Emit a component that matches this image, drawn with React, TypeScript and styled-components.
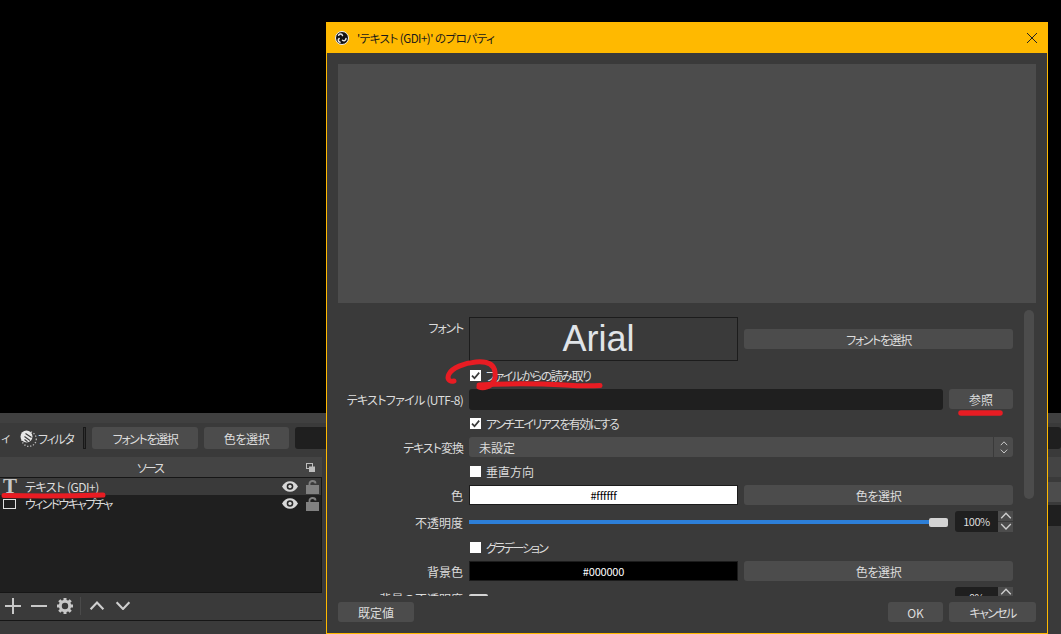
import React, { FunctionComponent } from "react";
import styled, { createGlobalStyle } from "styled-components";

const FIELD = "#4c4c4c";
const PANEL = "#3a3a3a";
const DARK = "#1f1f1f";
const TEXT = "#dcdcdc";
const RED = "#e81c23";

const GlobalStyle = createGlobalStyle`
    html, body {
        margin: 0;
        background: #000;
        overflow: hidden;
    }
    * {
        box-sizing: border-box;
    }
    body {
        font-family: "Noto Sans CJK JP", sans-serif;
        font-size: 12px;
        font-feature-settings: "palt";
        color: ${TEXT};
    }
`;

const ObsLogo = () => (
    <svg width="14" height="14" viewBox="0 0 14 14">
        <circle cx="7" cy="7" r="6.5" fill="#111" stroke="#f0f0f0" strokeWidth="1" />
        <g fill="none" stroke="#e8e8e8" strokeWidth="1.5" strokeLinecap="round">
            <path d="M3.600 4.200C4.800 2.600 7 2.700 7.500 4.600" />
            <path d="M11 7.600C10.800 9.600 8.800 10.400 7.500 9.200" />
            <path d="M5 11.200C3.200 10.600 2.600 8.500 4.200 7.500" />
        </g>
    </svg>
);

const CloseGlyph = () => (
    <svg width="12" height="12" viewBox="0 0 12 12">
        <path d="M1 1l10 10M11 1L1 11" stroke="#222" strokeWidth="1" fill="none" />
    </svg>
);

const Check = () => (
    <svg width="11" height="11" viewBox="0 0 11 11">
        <path d="M2 5.600l2.500 2.600L9.200 2.600" stroke="#3a3a3a" strokeWidth="1.700" fill="none" />
    </svg>
);

const Chevron: FunctionComponent<{ up?: boolean; size?: number; width?: number }> = ({
    up = false,
    size = 10,
    width = 1.2,
}) => (
    <svg width={size} height={size * 0.6} viewBox="0 0 10 6">
        <path
            d={up ? "M1 5.200L5 1l4 4.200" : "M1 .8L5 5l4-4.200"}
            stroke="#cfcfcf"
            strokeWidth={width}
            fill="none"
        />
    </svg>
);

const EyeIcon = () => (
    <svg width="16" height="11" viewBox="0 0 16 11">
        <path
            d="M0 5.500C2 2 4.800.3 8 .3s6 1.700 8 5.200c-2 3.500-4.800 5.200-8 5.200S2 9 0 5.500z"
            fill="#d8d8d8"
        />
        <circle cx="8" cy="5.500" r="3.300" fill="#2a2a2a" />
        <circle cx="8" cy="5.500" r="1.700" fill="#d8d8d8" />
    </svg>
);

const LockIcon = () => (
    <svg width="13" height="14" viewBox="0 0 13 14">
        <path d="M3.500 5.500V3.400C3.500 1.900 4.800 1 6.500 1S9.500 1.900 9.500 3.400" stroke="#808080" strokeWidth="1.800" fill="none" />
        <rect x="0" y="5" width="13" height="9" fill="#808080" />
    </svg>
);

const FilterIcon = () => (
    <svg width="17" height="17" viewBox="0 0 17 17">
        <circle cx="9" cy="9" r="7.300" fill="none" stroke="#bdbdbd" strokeWidth="1.300" strokeDasharray="1.300 1.700" />
        <circle cx="6.500" cy="6.500" r="6" fill="#e8e8e8" />
        <path d="M5.500 3.500l6 4M4.500 6.500l5.500 4M4.500 9.500l3 2.300" stroke="#3a3a3a" strokeWidth="1.100" />
    </svg>
);

const FloatIcon = () => (
    <svg width="9" height="9" viewBox="0 0 9 9">
        <rect x=".5" y=".5" width="6" height="5" fill="none" stroke="#bdbdbd" />
        <rect x="3" y="3.500" width="6" height="5.500" fill="#bdbdbd" />
    </svg>
);

const PlusIcon = () => (
    <svg width="16" height="16" viewBox="0 0 16 16">
        <path d="M0 8h16M8 0v16" stroke="#c8c8c8" strokeWidth="2" />
    </svg>
);

const MinusIcon = () => (
    <svg width="16" height="16" viewBox="0 0 16 16">
        <path d="M0 8h16" stroke="#c8c8c8" strokeWidth="2" />
    </svg>
);

const GearIcon = () => (
    <svg width="16" height="16" viewBox="0 0 16 16">
        <circle cx="8" cy="8" r="4.700" fill="none" stroke="#c8c8c8" strokeWidth="3" />
        <g stroke="#c8c8c8" strokeWidth="3">
            <path d="M8 0v3M8 13v3M0 8h3M13 8h3M2.300 2.300l2.100 2.100M11.600 11.600l2.100 2.100M13.700 2.300l-2.100 2.100M4.400 11.600l-2.100 2.100" />
        </g>
    </svg>
);

const Markup = () => (
    <Overlay width="1061" height="634" viewBox="0 0 1061 634">
        <g fill="none" stroke={RED} strokeLinecap="round" strokeLinejoin="round">
            <path strokeWidth="5" d="M4 495.500C30 496 70 496 103 495" />
            <path
                strokeWidth="5"
                d="M454 381C448 382 447 378 449 374C452 368 464 363 476 362C488 361 494 365 495 372C496 379 493 385 487 387C484 388 481 388 479 387"
            />
            <path strokeWidth="5" d="M479 385C515 383 545 384 565 385C580 386 592 386 600 385.500" />
            <path strokeWidth="5.500" d="M961 413H1000" />
        </g>
    </Overlay>
);

const CheckField: FunctionComponent<{ label: string; checked?: boolean; track?: number }> = ({
    label,
    checked = false,
    track = 0,
}) => (
    <Row>
        <span />
        <CheckRow>
            <CheckBox>{checked && <Check />}</CheckBox>
            <Fit $track={track}>{label}</Fit>
        </CheckRow>
    </Row>
);

const ColorField: FunctionComponent<{ label: string; value: string; light?: boolean }> = ({ label, value, light = false }) => (
    <Row>
        <Label>{label}</Label>
        <Swatch $light={light}>{value}</Swatch>
        <Button><Fit $track={-0.4}>色を選択</Fit></Button>
    </Row>
);

const SliderField: FunctionComponent<{ label: string; value: number }> = ({ label, value }) => (
    <TallRow>
        <SliderLabel>{label}</SliderLabel>
        <SliderCell>
            <Slider>
                <SliderFill $value={value} />
                <Thumb />
                <SliderRest $value={100 - value} />
            </Slider>
            <Spin>
                <SpinValue>{value}%</SpinValue>
                <SpinButtons>
                    <SpinButton><Chevron up size={12} width={1.1} /></SpinButton>
                    <SpinButton><Chevron size={12} width={1.1} /></SpinButton>
                </SpinButtons>
            </Spin>
        </SliderCell>
    </TallRow>
);

const App = () => {
    return (
        <Root>
            <GlobalStyle />
            <Preview />
            <Main>
                <TopBand />
                <ToolBar>
                    <Clipped>ィ</Clipped>
                    <FilterItem>
                        <FilterIcon />
                        <Fit $track={-1.3}>フィルタ</Fit>
                    </FilterItem>
                    <Splitter />
                    <FontButton><Fit $track={-1.4}>フォントを選択</Fit></FontButton>
                    <ColorButton><Fit $track={-0.4}>色を選択</Fit></ColorButton>
                    <TextInput />
                </ToolBar>
                <Docks>
                    <SourceDock>
                        <DockTitle>
                            <Fit $track={-2}>ソース</Fit>
                            <FloatSlot><FloatIcon /></FloatSlot>
                        </DockTitle>
                        <SourceList>
                            <SourceRow $selected>
                                <SourceIcon>T</SourceIcon>
                                <SourceName $track={-0.5}>テキスト (GDI+)</SourceName>
                                <EyeIcon />
                                <LockIcon />
                            </SourceRow>
                            <SourceRow>
                                <SourceIcon><WindowIcon /></SourceIcon>
                                <SourceName $track={-1.7}>ウィンドウキャプチャ</SourceName>
                                <EyeIcon />
                                <LockIcon />
                            </SourceRow>
                        </SourceList>
                        <SourceTools>
                            <PlusIcon />
                            <MinusIcon />
                            <GearIcon />
                            <ToolDivider />
                            <Chevron up size={16} width={1.3} />
                            <Chevron size={16} width={1.3} />
                        </SourceTools>
                    </SourceDock>
                    <MixerDock>
                        <MixerTitle />
                        <MixerButton />
                        <MixerField />
                    </MixerDock>
                </Docks>
            </Main>

            <Dialog>
                <TitleBar>
                    <ObsLogo />
                    <Title>'テキスト (GDI+)' のプロパティ</Title>
                    <CloseSlot><CloseGlyph /></CloseSlot>
                </TitleBar>
                <DialogBody>
                    <PropertyPreview />
                    <ScrollArea>
                        <Form>
                            <FontRow>
                                <TopLabel><Fit $track={-1.2}>フォント</Fit></TopLabel>
                                <FontBox>Arial</FontBox>
                                <FontPicker><Fit $track={-1.4}>フォントを選択</Fit></FontPicker>
                            </FontRow>
                            <CheckField label="ファイルからの読み取り" checked track={-1.5} />
                            <Row>
                                <Label><Fit $track={-0.7}>テキストファイル (UTF-8)</Fit></Label>
                                <FileCell>
                                    <FileInput />
                                    <BrowseButton>参照</BrowseButton>
                                </FileCell>
                            </Row>
                            <CheckField label="アンチエイリアスを有効にする" checked track={-1.6} />
                            <Row>
                                <Label><Fit $track={-1}>テキスト変換</Fit></Label>
                                <Select>
                                    <SelectValue>未設定</SelectValue>
                                    <SelectArrows>
                                        <Chevron up size={8} />
                                        <Chevron size={8} />
                                    </SelectArrows>
                                </Select>
                            </Row>
                            <CheckField label="垂直方向" />
                            <ColorField label="色" value="#ffffff" light />
                            <SliderField label="不透明度" value={100} />
                            <CheckField label="グラデーション" track={-2} />
                            <ColorField label="背景色" value="#000000" />
                            <SliderField label="背景の不透明度" value={0} />
                        </Form>
                        <ScrollTrack>
                            <ScrollThumb />
                        </ScrollTrack>
                    </ScrollArea>
                    <Footer>
                        <DefaultsButton>既定値</DefaultsButton>
                        <FooterRight>
                            <OkButton>OK</OkButton>
                            <CancelButton><Fit $track={-1.6}>キャンセル</Fit></CancelButton>
                        </FooterRight>
                    </Footer>
                </DialogBody>
            </Dialog>
            <Markup />
        </Root>
    );
};

const Root = styled.div`
    position: relative;
    width: 1061px;
    height: 634px;
    display: flex;
    flex-direction: column;
    overflow: hidden;
    background: #000;
`;

const Fit = styled.span<{ $track: number }>`
    letter-spacing: ${(p) => p.$track}px;
    white-space: nowrap;
`;

const Preview = styled.div`
    height: 413px;
    background: #000;
`;

const Main = styled.div`
    flex: 1;
    display: flex;
    flex-direction: column;
    background: ${PANEL};
`;

const TopBand = styled.div`
    height: 10px;
    background: #404040;
`;

const ToolBar = styled.div`
    height: 30px;
    padding: 4px 0;
    display: flex;
    align-items: center;
`;

const Clipped = styled.span`
    width: 20px;
    padding-left: 1px;
    line-height: 22px;
`;

const FilterItem = styled.div`
    width: 63px;
    display: flex;
    align-items: center;
    gap: 1px;
`;

const Splitter = styled.div`
    width: 3px;
    height: 22px;
    background: #303030;
    border: 1px solid #181818;
    margin-right: 6px;
`;

const Button = styled.div`
    height: 20px;
    background: ${FIELD};
    border-radius: 3px;
    display: flex;
    align-items: center;
    justify-content: center;
    white-space: nowrap;
`;

const FontButton = styled(Button)`
    width: 106px;
    height: 22px;
    margin-right: 6px;
`;

const ColorButton = styled(Button)`
    width: 85px;
    height: 22px;
    margin-right: 6px;
`;

const TextInput = styled.div`
    flex: 1;
    height: 22px;
    background: ${DARK};
    border-radius: 3px;
`;

const Docks = styled.div`
    flex: 1;
    display: flex;
    padding-top: 4px;
`;

const SourceDock = styled.div`
    width: 322px;
    display: flex;
    flex-direction: column;
`;

const DockTitle = styled.div`
    position: relative;
    height: 20px;
    padding-right: 22px;
    background: #444;
    display: flex;
    align-items: center;
    justify-content: center;
`;

const FloatSlot = styled.span`
    position: absolute;
    right: 7px;
    top: 6px;
    line-height: 0;
`;

const SourceList = styled.div`
    height: 116px;
    background: ${DARK};
    border: 1px solid #161616;
    border-left: 0;
    display: flex;
    flex-direction: column;
`;

const SourceRow = styled.div<{ $selected?: boolean }>`
    height: 17px;
    padding: 0 2px 0 3px;
    display: flex;
    align-items: center;
    background: ${(p) => (p.$selected ? PANEL : "transparent")};
    svg:nth-of-type(1) {
        margin-right: 8px;
    }
`;

const SourceIcon = styled.span`
    width: 22px;
    height: 16px;
    display: flex;
    align-items: center;
    font-family: "Liberation Serif", serif;
    font-weight: bold;
    font-size: 21px;
    color: #c8c8c8;
`;

const WindowIcon = styled.span`
    display: block;
    width: 13px;
    height: 10px;
    border: 1px solid #e0e0e0;
    margin-top: 1px;
`;

const SourceName = styled.span<{ $track: number }>`
    flex: 1;
    white-space: nowrap;
    letter-spacing: ${(p) => p.$track}px;
`;

const SourceTools = styled.div`
    height: 28px;
    padding: 0 0 2px 5px;
    display: flex;
    align-items: center;
    gap: 10px;
    border-bottom: 1px solid #161616;
`;

const ToolDivider = styled.span`
    width: 1px;
    height: 18px;
    background: #4a4a4a;
    margin: 0 -2px 0 -3px;
`;

const MixerDock = styled.div`
    flex: 1;
    margin-left: 8px;
    display: flex;
    flex-direction: column;
`;

const MixerTitle = styled.div`
    height: 20px;
    background: #444;
`;

const MixerButton = styled.div`
    height: 20px;
    margin: 5px 0 3px;
    background: ${FIELD};
`;

const MixerField = styled.div`
    height: 21px;
    background: ${DARK};
`;

const Dialog = styled.div`
    position: absolute;
    left: 326px;
    top: 22px;
    width: 722px;
    height: 612px;
    border: 1px solid #ffb900;
    background: ${PANEL};
    display: flex;
    flex-direction: column;
`;

const TitleBar = styled.div`
    height: 30px;
    flex: none;
    background: #ffb900;
    padding-left: 8px;
    display: flex;
    align-items: center;
    gap: 8px;
`;

const Title = styled.span`
    flex: 1;
    color: #1a1a1a;
    font-size: 11.5px;
    letter-spacing: -0.5px;
`;

const CloseSlot = styled.span`
    width: 21px;
    line-height: 0;
`;

const DialogBody = styled.div`
    flex: 1;
    min-height: 0;
    padding: 11px 11px 0;
    display: flex;
    flex-direction: column;
`;

const PropertyPreview = styled.div`
    height: 239px;
    flex: none;
    background: ${FIELD};
`;

const ScrollArea = styled.div`
    height: 287px;
    flex: none;
    margin-top: 6px;
    display: flex;
    gap: 11px;
    overflow: hidden;
`;

const Form = styled.div`
    width: 675px;
    flex: none;
    padding-top: 8px;
    display: flex;
    flex-direction: column;
    gap: 4px;
`;

const Row = styled.div`
    height: 20px;
    flex: none;
    display: grid;
    grid-template-columns: 125px 1fr 1fr;
    column-gap: 6px;
`;

const FontRow = styled(Row)`
    height: 44px;
`;

const TallRow = styled(Row)`
    height: 24px;
`;

const Label = styled.label`
    display: flex;
    align-items: center;
    justify-content: flex-end;
    white-space: nowrap;
`;

const TopLabel = styled(Label)`
    align-items: flex-start;
    padding-top: 2px;
`;

const SliderLabel = styled(Label)`
    padding-top: 3px;
`;

const FontBox = styled.div`
    background: ${PANEL};
    border: 1px solid #1c1c1c;
    padding-right: 10px;
    font-family: "Liberation Sans", sans-serif;
    font-size: 36px;
    display: flex;
    align-items: center;
    justify-content: center;
    color: #e0e4e8;
`;

const FontPicker = styled(Button)`
    align-self: center;
`;

const CheckRow = styled.div`
    grid-column: 2 / 4;
    display: flex;
    align-items: center;
    gap: 5px;
    padding-left: 1px;
`;

const CheckBox = styled.span`
    width: 11px;
    height: 11px;
    background: #fff;
    line-height: 0;
`;

const FileCell = styled.div`
    grid-column: 2 / 4;
    display: flex;
    gap: 6px;
`;

const FileInput = styled.div`
    flex: 1;
    height: 21px;
    background: ${DARK};
    border-radius: 3px;
`;

const BrowseButton = styled(Button)`
    width: 64px;
`;

const Select = styled.div`
    grid-column: 2 / 4;
    background: ${FIELD};
    border-radius: 3px;
    display: flex;
    align-items: center;
`;

const SelectValue = styled.span`
    flex: 1;
    padding-left: 10px;
`;

const SelectArrows = styled.span`
    width: 20px;
    height: 100%;
    border-left: 1px solid ${PANEL};
    display: flex;
    flex-direction: column;
    align-items: center;
    justify-content: center;
    gap: 3px;
`;

const Swatch = styled.div<{ $light: boolean }>`
    background: ${(p) => (p.$light ? "#fff" : "#000")};
    color: ${(p) => (p.$light ? "#000" : "#fff")};
    border: 1px solid #1c1c1c;
    font-size: 11px;
    letter-spacing: -0.2px;
    display: flex;
    align-items: center;
    justify-content: center;
`;

const SliderCell = styled.div`
    grid-column: 2 / 4;
    display: flex;
    align-items: center;
    gap: 7px;
`;

const Slider = styled.div`
    flex: 1;
    display: flex;
    align-items: center;
    padding-top: 2px;
`;

const SliderFill = styled.div<{ $value: number }>`
    flex: ${(p) => p.$value};
    height: 4px;
    background: #2d7fd8;
`;

const SliderRest = styled.div<{ $value: number }>`
    flex: ${(p) => p.$value};
    height: 4px;
    background: ${FIELD};
`;

const Thumb = styled.div`
    width: 19px;
    height: 9px;
    border-radius: 2px;
    background: #d4d4d4;
`;

const Spin = styled.div`
    width: 58px;
    height: 21px;
    display: flex;
`;

const SpinValue = styled.div`
    flex: 1;
    background: ${DARK};
    border-radius: 3px 0 0 3px;
    font-size: 11px;
    letter-spacing: -0.5px;
    display: flex;
    align-items: center;
    justify-content: center;
`;

const SpinButtons = styled.div`
    width: 15px;
    display: flex;
    flex-direction: column;
    gap: 1px;
`;

const SpinButton = styled.div`
    flex: 1;
    background: ${FIELD};
    display: flex;
    align-items: center;
    justify-content: center;
`;

const ScrollTrack = styled.div`
    width: 10px;
    flex: none;
    padding-top: 1px;
`;

const ScrollThumb = styled.div`
    height: 189px;
    background: ${FIELD};
    border-radius: 5px;
`;

const Footer = styled.div`
    flex: 1;
    padding-top: 6px;
    display: flex;
    justify-content: space-between;
`;

const FooterRight = styled.div`
    display: flex;
    gap: 6px;
`;

const DefaultsButton = styled(Button)`
    width: 76px;
`;

const OkButton = styled(Button)`
    width: 55px;
`;

const CancelButton = styled(Button)`
    width: 87px;
`;

const Overlay = styled.svg`
    position: absolute;
    left: 0;
    top: 0;
    pointer-events: none;
`;

export default App;
